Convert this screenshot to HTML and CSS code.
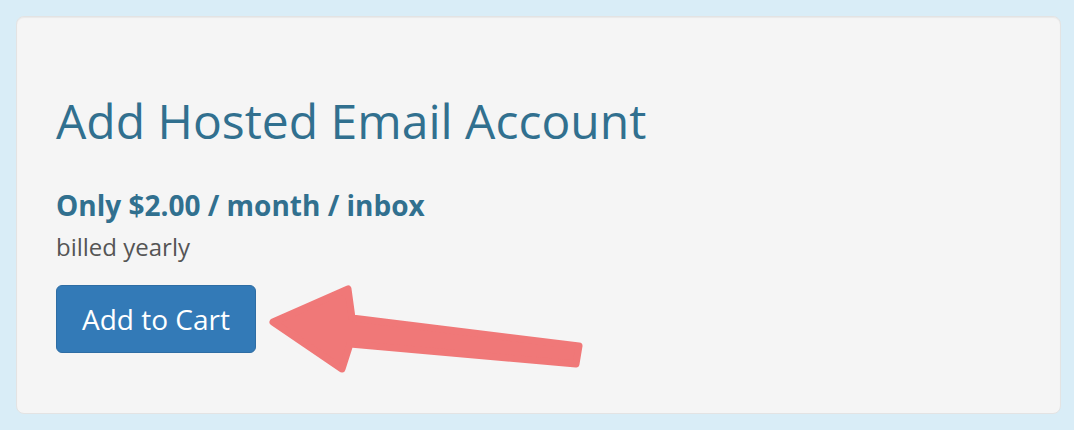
FILE: index.html
```html
<!DOCTYPE html>
<html lang="en">
<head>
    <meta charset="UTF-8">
    <meta name="viewport" content="width=device-width, initial-scale=1.0">
    <title>Add Hosted Email Account</title>
    <link rel="stylesheet" href="styles.css">
</head>
<body>
    <div class="page">
        <div class="well">
            <h2 class="title">Add Hosted Email Account</h2>
            <p class="price">Only $2.00 / month / inbox</p>
            <p class="billing">billed yearly</p>
            <button class="btn-cart">Add to Cart</button>
        </div>

        <!-- annotation arrow drawn over the card -->
        <svg class="arrow" viewBox="0 0 1074 430" width="1074" height="430">
            <polygon points="273,322 348,289 352,318 579,346 576,364 350,344 342,369"
                     fill="#f07878" stroke="#f07878" stroke-width="7" stroke-linejoin="round"/>
        </svg>
    </div>
</body>
</html>
```

FILE: styles.css
```css
body {
    margin: 0;
    background-color: #d9edf7;
    font-family: 'Open Sans', 'Noto Sans', sans-serif;
}
.page {
    position: relative;
    padding: 16px 13px 17px 16px;
}
.well {
    display: flex;
    flex-direction: column;
    align-items: flex-start;
    padding: 78px 39px 60px 39px;
    border: 1px solid #e3e3e3;
    border-radius: 8px;
    background-color: #f5f5f5;
    box-shadow: inset 0 1px 1px rgba(0, 0, 0, 0.05);
}
.title {
    margin: 0;
    color: #31708f;
    font-size: 48px;
    font-weight: 400;
    line-height: 1.1;
}
.price {
    margin: 41px 0 0;
    color: #31708f;
    font-size: 28px;
    font-weight: 700;
    line-height: 1.2;
}
.billing {
    margin: 11px 0 0;
    color: #555;
    font-size: 24px;
    line-height: 1.2;
}
.btn-cart {
    margin-top: 23px;
    width: 200px;
    height: 68px;
    padding: 0;
    border: 1px solid #2e6da4;
    border-radius: 6px;
    background-color: #337ab7;
    color: #fff;
    font-family: inherit;
    font-size: 28px;
    cursor: pointer;
}
.arrow {
    position: absolute;
    top: 0;
    left: 0;
    pointer-events: none;
}
```
